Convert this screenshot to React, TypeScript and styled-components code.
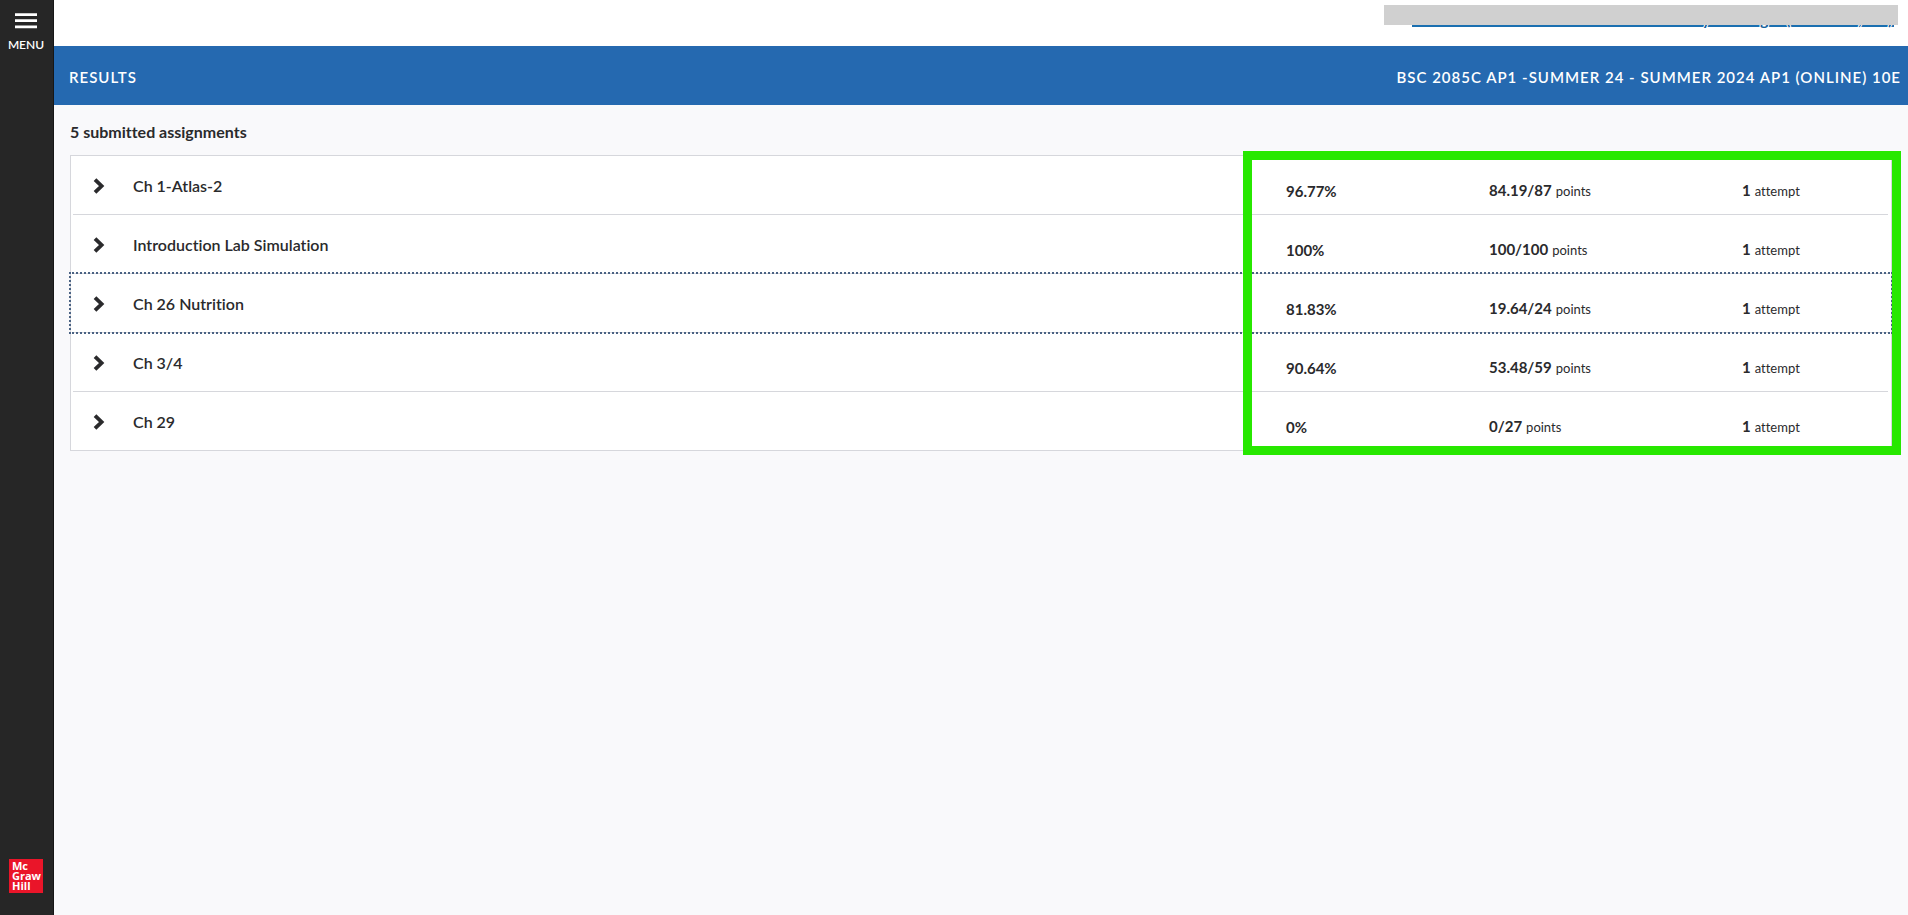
import React from "react";
import styled, { createGlobalStyle } from "styled-components";

const GlobalStyle = createGlobalStyle`
  *, *::before, *::after { box-sizing: border-box; }
  body {
    margin: 0;
    background: #f9f9fb;
    color: #2a2a2c;
    font-family: Lato, "Liberation Sans", sans-serif;
    font-size: 16px;
    line-height: 20px;
    font-variant-ligatures: none;
  }
`;

const Page = styled.div`
  display: grid;
  grid-template-columns: 54px minmax(0, 1fr);
  min-height: 100vh;
`;

const Sidebar = styled.nav`
  display: flex;
  flex-direction: column;
  align-items: center;
  justify-content: space-between;
  padding: 12px 1px 22px 0;
  background: #262626;
  border-right: 1px solid #161616;
`;

const MenuButton = styled.button`
  display: flex;
  flex-direction: column;
  align-items: center;
  gap: 8px;
  padding: 0;
  border: 0;
  background: none;
  color: #fff;
  font: inherit;
  font-size: 12px;
  font-weight: 600;
  line-height: 16px;
  cursor: pointer;
`;

const Logo = styled.div`
  display: flex;
  flex-direction: column;
  width: 34px;
  height: 34px;
  padding: 2px 3px;
  background: #ea1529;
  color: #fff;
  font-family: "Open Sans", sans-serif;
  font-size: 11px;
  font-weight: 700;
  line-height: 10px;
`;

const LogoLine = styled.span`
  display: block;
`;

const TopBar = styled.header`
  position: relative;
  display: flex;
  justify-content: flex-end;
  height: 46px;
  padding: 8px 14px 0 0;
  background: #fff;
`;

const AccountLink = styled.a`
  display: grid;
  grid-template-columns: 290px 58px 26px 72px 30px 6px;
  height: 19px;
  border-bottom: 2px solid #1a6fb0;
  color: #17609c;
  font-weight: 700;
  line-height: 22px;
  text-decoration: none;
  -webkit-text-stroke: 2px #fff;
  paint-order: stroke fill;
`;

const Redaction = styled.div`
  position: absolute;
  top: 5px;
  right: 10px;
  width: 514px;
  height: 20px;
  background: #d0d0d0;
`;

const TitleBar = styled.div`
  display: flex;
  align-items: center;
  justify-content: space-between;
  min-height: 59px;
  padding: 2px 7px 0 15px;
  background: #2569b0;
  color: #fff;
  font-size: 15px;
  font-weight: 600;
  letter-spacing: 1px;
`;

const BarTitle = styled.h1`
  margin: 0;
  font-size: inherit;
  font-weight: inherit;
`;

const Content = styled.main`
  padding: 17px 16px;
`;

const Summary = styled.h2`
  margin: 0 0 13px;
  font-size: 16px;
  font-weight: 700;
`;

const List = styled.ul`
  position: relative;
  margin: 0;
  padding: 0;
  border: 1px solid #d6d7dc;
  background: #fff;
  list-style: none;
`;

const Item = styled.li`
  & + &::before {
    content: "";
    display: block;
    height: 1px;
    margin: 0 3px 0 2px;
    background: #d6d7dc;
  }
`;

const Row = styled.button<{ $focused?: boolean }>`
  display: grid;
  grid-template-columns: minmax(0, 1fr) 203px 253px 149px;
  align-items: center;
  width: 100%;
  height: 58px;
  padding: 1px 0 0 22px;
  border: 0;
  background: none;
  color: inherit;
  font: inherit;
  text-align: left;
  cursor: pointer;
  outline: ${(p) => (p.$focused ? "2px dotted #4a6283" : "none")};
  outline-offset: 0;
`;

const Name = styled.span`
  display: flex;
  align-items: center;
  gap: 28px;
  font-weight: 600;
`;

const Stat = styled.span`
  display: flex;
  align-items: baseline;
  gap: 4px;
  padding-top: 10px;
  font-size: 13px;
`;

const Value = styled.strong`
  font-size: 15px;
  font-weight: 700;
`;

const Highlight = styled.div`
  position: absolute;
  top: -5px;
  right: -10px;
  bottom: -5px;
  width: 658px;
  border: 9px solid #27e800;
  pointer-events: none;
`;

const assignments = [
  { name: "Ch 1-Atlas-2", percent: "96.77%", points: "84.19/87" },
  { name: "Introduction Lab Simulation", percent: "100%", points: "100/100" },
  { name: "Ch 26 Nutrition", percent: "81.83%", points: "19.64/24", focused: true },
  { name: "Ch 3/4", percent: "90.64%", points: "53.48/59" },
  { name: "Ch 29", percent: "0%", points: "0/27" },
];

const Chevron = () => (
  <svg width="12" height="16" viewBox="0 0 12 16" aria-hidden="true">
    <path d="M2 1.6 8.6 8 2 14.4" fill="none" stroke="#2a2a2c" strokeWidth="3.8" />
  </svg>
);

export default function App() {
  return (
    <Page>
      <GlobalStyle />
      <Sidebar>
        <MenuButton type="button">
          <svg width="22" height="17" viewBox="0 0 22 17" aria-hidden="true">
            <path d="M0 2.7h22M0 8.7h22M0 14.9h22" stroke="#fff" strokeWidth="2.8" />
          </svg>
          MENU
        </MenuButton>
        <Logo>
          <LogoLine>Mc</LogoLine>
          <LogoLine>Graw</LogoLine>
          <LogoLine>Hill</LogoLine>
        </Logo>
      </Sidebar>
      <div>
        <TopBar>
          <AccountLink href="#account">
            <span />
            <span>y</span>
            <span>g</span>
            <span>(</span>
            <span>,</span>
            <span>)</span>
          </AccountLink>
          <Redaction />
        </TopBar>
        <TitleBar>
          <BarTitle>RESULTS</BarTitle>
          <span>BSC 2085C AP1 -SUMMER 24 - SUMMER 2024 AP1 (ONLINE) 10E</span>
        </TitleBar>
        <Content>
          <Summary>5 submitted assignments</Summary>
          <List>
            {assignments.map((a) => (
              <Item key={a.name}>
                <Row type="button" $focused={a.focused} aria-expanded={false}>
                  <Name>
                    <Chevron />
                    {a.name}
                  </Name>
                  <Stat>
                    <Value>{a.percent}</Value>
                  </Stat>
                  <Stat>
                    <Value>{a.points}</Value> points
                  </Stat>
                  <Stat>
                    <Value>1</Value> attempt
                  </Stat>
                </Row>
              </Item>
            ))}
            <Highlight />
          </List>
        </Content>
      </div>
    </Page>
  );
}
